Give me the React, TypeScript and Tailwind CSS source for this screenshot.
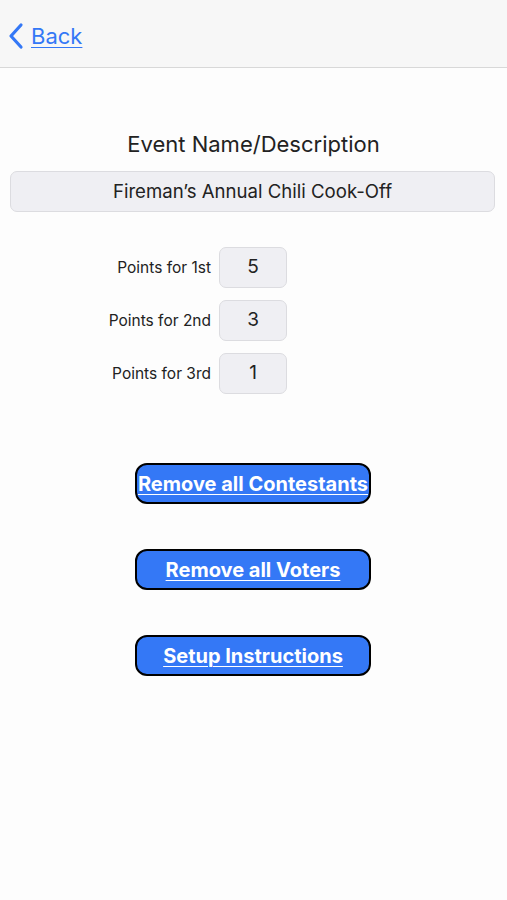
import React from 'react';

const points = [
    {label: 'Points for 1st', value: '5'},
    {label: 'Points for 2nd', value: '3'},
    {label: 'Points for 3rd', value: '1'},
];

const actions = ['Remove all Contestants', 'Remove all Voters', 'Setup Instructions'];

const App = () => {
    return (
        <div className="w-[507px] h-[900px] bg-[#fdfdfd] text-[#1c1c1e]" style={{fontFamily: 'Inter, "Noto Sans", sans-serif'}}>
            {/* nav bar */}
            <div className="h-[68px] bg-[#f7f7f7] border-b border-[#d8d8d8] flex items-center pl-[7px] pt-[5px]">
                <a className="flex items-center gap-[6px] text-[#3478f6]">
                    <svg width="18" height="28" viewBox="0 0 18 28" fill="none">
                        <path d="M14 3 L4 14 L14 25" stroke="#3478f6" strokeWidth="3.2" strokeLinecap="round" strokeLinejoin="round"/>
                    </svg>
                    <span className="text-[22px] leading-none underline underline-offset-[3px] decoration-1">Back</span>
                </a>
            </div>

            <div className="flex flex-col items-center pt-[62px]">
                <h1 className="text-[22px] leading-[28px] text-[#222]">Event Name/Description</h1>
            </div>

            <div className="pl-[10px] pr-[12px] mt-[13px]">
                <div className="h-[41px] rounded-[7px] bg-[#efeff3] border border-[#dcdce0] flex items-center justify-center text-[18.6px] text-[#222]">
                    Fireman’s Annual Chili Cook-Off
                </div>
            </div>

            <div className="flex flex-col gap-[12px] mt-[35px]">
                {points.map((p) => (
                    <div key={p.label} className="flex items-center">
                        <span className="w-[211px] text-right text-[15.5px] text-[#222]">{p.label}</span>
                        <div className="ml-[8px] w-[68px] h-[41px] rounded-[7px] bg-[#efeff3] border border-[#dcdce0] flex items-center justify-center text-[19px] text-[#222]">
                            {p.value}
                        </div>
                    </div>
                ))}
            </div>

            <div className="flex flex-col items-center gap-[45px] mt-[69px] pr-[1px]">
                {actions.map((a) => (
                    <button key={a} className="w-[236px] h-[41px] rounded-[12px] border-2 border-black bg-[#3478f6] text-white font-bold text-[20px] underline underline-offset-[3px] decoration-1 whitespace-nowrap flex items-center justify-center">
                        {a}
                    </button>
                ))}
            </div>
        </div>
    );
};

export default App;
